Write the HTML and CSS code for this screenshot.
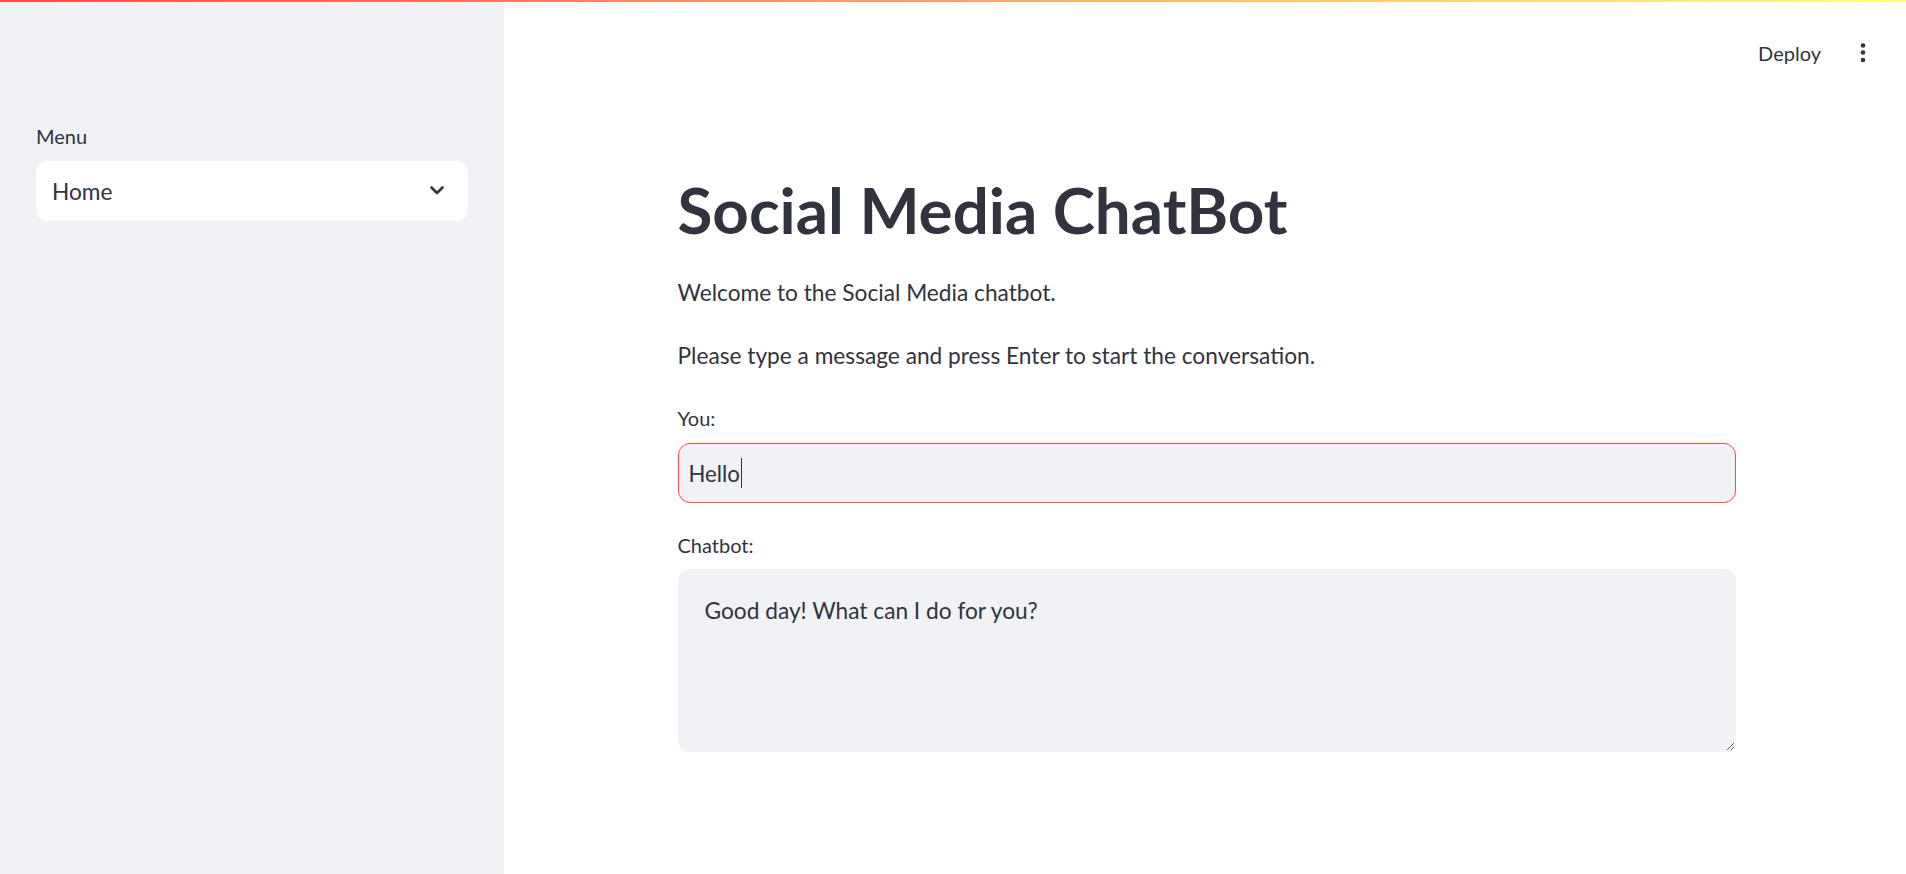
FILE: index.html
```html
<!DOCTYPE html>
<html lang="en">
<head>
<meta charset="utf-8">
<title>Social Media ChatBot</title>
<link rel="stylesheet" href="styles.css">
</head>
<body>
<div class="topbar"></div>
<div class="app">
  <aside class="sidebar">
    <label class="label">Menu</label>
    <div class="select">
      <span>Home</span>
      <svg class="chevron" width="14" height="9" viewBox="0 0 14 9"><path d="M1.5 1.5 L7 7 L12.5 1.5" fill="none" stroke="#31333f" stroke-width="2.6" stroke-linecap="round" stroke-linejoin="round"/></svg>
    </div>
  </aside>
  <main class="main">
    <header class="toolbar">
      <span class="deploy">Deploy</span>
      <svg class="kebab" width="6" height="22" viewBox="0 0 6 22"><circle cx="3" cy="3.5" r="2.3" fill="#31333f"/><circle cx="3" cy="10.5" r="2.3" fill="#31333f"/><circle cx="3" cy="18" r="2.3" fill="#31333f"/></svg>
    </header>
    <section class="block">
      <h1 class="title">Social Media ChatBot</h1>
      <p class="text">Welcome to the Social Media chatbot.</p>
      <p class="text text-second">Please type a message and press Enter to start the conversation.</p>
      <label class="label field-label field-first">You:</label>
      <div class="input">Hello<span class="caret"></span></div>
      <label class="label field-label">Chatbot:</label>
      <textarea class="area" readonly>Good day! What can I do for you?</textarea>
    </section>
  </main>
</div>
</body>
</html>
```
FILE: styles.css
```css
html, body {
  margin: 0;
  height: 100%;
}
body {
  font-family: Lato, "Noto Sans", sans-serif;
  color: #31333f;
  background: #ffffff;
  overflow: hidden;
}
.topbar {
  height: 2px;
  background: linear-gradient(90deg, #ff4b4b, #fffd80);
}
.app {
  display: flex;
  height: 872px;
}
.sidebar {
  width: 504px;
  flex: none;
  box-sizing: border-box;
  background: #f0f2f6;
  padding: 116px 36px 0;
}
.label {
  display: block;
  font-size: 20px;
  line-height: 36px;
  height: 36px;
}
.select {
  margin-top: 7px;
  height: 60px;
  box-sizing: border-box;
  background: #ffffff;
  border-radius: 12px;
  display: flex;
  align-items: center;
  justify-content: space-between;
  padding: 0 24px 0 16px;
  font-size: 22.7px;
}
.chevron {
  display: block;
  margin-top: -1px;
}
.main {
  flex: 1;
  display: flex;
  flex-direction: column;
  padding-left: 3px;
}
.toolbar {
  height: 101px;
  flex: none;
  display: flex;
  align-items: center;
  justify-content: flex-end;
  padding-right: 40px;
}
.deploy {
  font-size: 20px;
  margin-right: 39px;
}
.kebab {
  display: block;
}
.block {
  width: 1058px;
  margin: 0 auto;
}
.title {
  margin: 67px 0 0;
  font-size: 63.7px;
  font-weight: 700;
  line-height: 80px;
}
.text {
  margin: 24px 0 0;
  font-size: 22.7px;
  line-height: 38px;
}
.text-second {
  margin-top: 25px;
}
.field-label {
  margin-top: 24px;
}
.field-first {
  margin-top: 25px;
}
.input {
  margin-top: 7px;
  height: 60px;
  box-sizing: border-box;
  border: 1px solid #ff4b4b;
  border-radius: 12px;
  background: #f0f2f6;
  padding-left: 10px;
  display: flex;
  align-items: center;
  font-size: 22.2px;
}
.caret {
  width: 1px;
  height: 30px;
  background: #31333f;
  margin-left: 1px;
}
.area {
  display: block;
  width: 100%;
  margin-top: 6px;
  height: 183px;
  box-sizing: border-box;
  border: 1px solid #f0f2f6;
  border-radius: 12px;
  background: #f0f2f6;
  padding: 24px 24px 24px 26px;
  font-family: inherit;
  font-size: 22.7px;
  line-height: 34px;
  color: #31333f;
  resize: vertical;
  outline: none;
}
```
